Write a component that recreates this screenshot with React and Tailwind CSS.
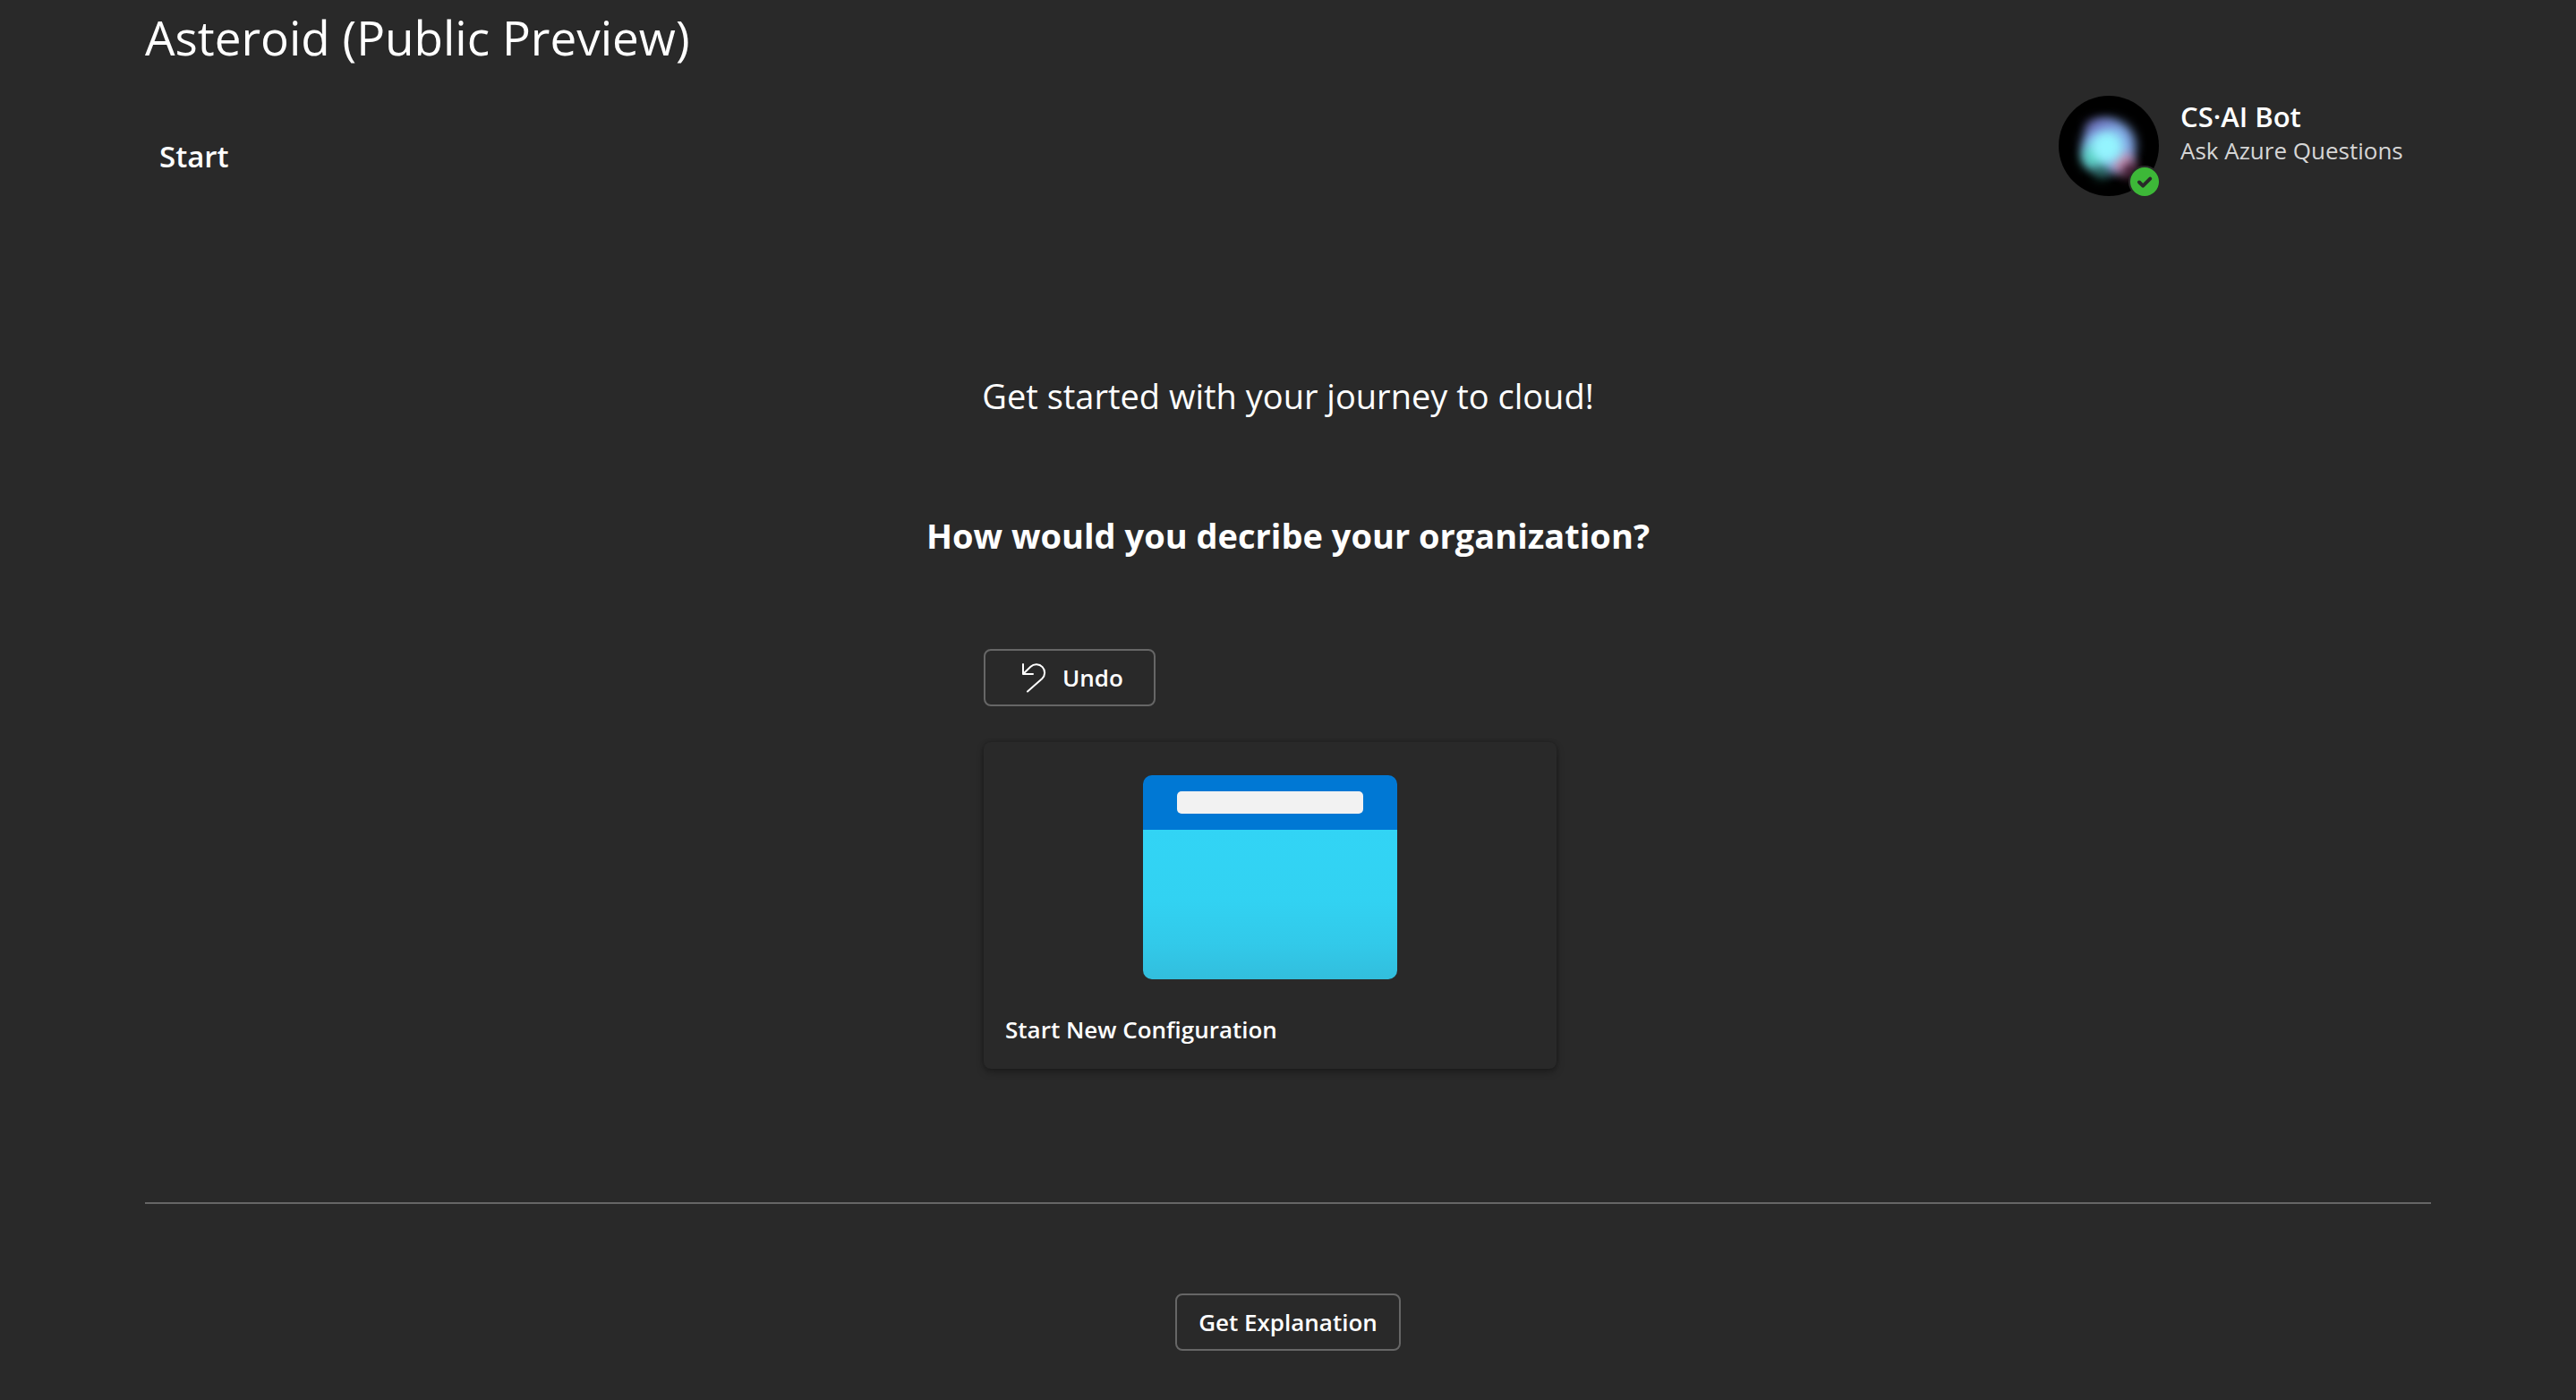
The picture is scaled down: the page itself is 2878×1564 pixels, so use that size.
function BotAvatar() {
  return (
    <svg viewBox="0 0 112 112" className="size-28" role="img" aria-label="CS·AI Bot, available">
      <defs>
        <filter id="soft" x="-100%" y="-100%" width="300%" height="300%" colorInterpolationFilters="sRGB">
          <feGaussianBlur stdDeviation="6" />
        </filter>
      </defs>
      <circle cx="56" cy="56" r="56" fill="#000" />
      <circle cx="56" cy="56" r="30" fill="#80a4e4" filter="url(#soft)" />
      <ellipse cx="46" cy="35" rx="16" ry="9" fill="#7470c4" fillOpacity="0.7" filter="url(#soft)" />
      <ellipse cx="39" cy="68" rx="13" ry="14" fill="#54ccbc" filter="url(#soft)" />
      <circle cx="48" cy="84" r="9" fill="#206858" fillOpacity="0.8" filter="url(#soft)" />
      <circle cx="72" cy="75" r="12" fill="#c890b4" filter="url(#soft)" />
      <circle cx="80" cy="84" r="9" fill="#401830" filter="url(#soft)" />
      <circle cx="54" cy="57" r="18" fill="#94f4fe" filter="url(#soft)" />
      <circle cx="96" cy="96" r="18" fill="#292929" />
      <circle cx="96" cy="96" r="16" fill="#3db838" />
      <path d="M90 96.500l4.200 4.200 8-8" fill="none" stroke="#292929" strokeWidth="4" strokeLinecap="round" strokeLinejoin="round" />
    </svg>
  );
}

function UndoIcon() {
  return (
    <svg viewBox="0 0 40 40" className="size-10" fill="none" stroke="currentColor" strokeWidth="2" strokeLinecap="round" strokeLinejoin="round" aria-hidden="true">
      <path d="M8 5v11h11" />
      <path d="M8.500 15.500L16.500 7.700A9.200 9.200 0 0 1 29.200 21.200L13 35.500" />
    </svg>
  );
}

function WindowIcon() {
  return (
    <svg viewBox="0 0 284 228" className="mx-auto h-[228px] w-[284px]" aria-hidden="true">
      <defs>
        <linearGradient id="pane" x1="0" y1="0" x2="0" y2="1">
          <stop offset="0" stopColor="#32d4f5" />
          <stop offset="0.47" stopColor="#32d2f2" />
          <stop offset="0.77" stopColor="#32c9e9" />
          <stop offset="1" stopColor="#32bedd" />
        </linearGradient>
      </defs>
      <path d="M0 61h284v157a10 10 0 0 1-10 10H10a10 10 0 0 1-10-10z" fill="url(#pane)" />
      <path d="M10 0h264a10 10 0 0 1 10 10v51H0V10A10 10 0 0 1 10 0z" fill="#0078d4" />
      <rect x="38" y="18" width="208" height="25" rx="5" fill="#f2f2f2" />
    </svg>
  );
}

const buttonClass =
  "flex h-16 cursor-pointer items-center justify-center gap-3 rounded-lg border-2 border-[#666666] text-[26px] leading-10 font-semibold hover:bg-[#3d3d3d]";

export default function App() {
  return (
    <main className="min-h-screen bg-[#292929] px-6 pb-14 font-['Open_Sans','Noto_Sans',sans-serif] text-white lg:px-[162px]">
      <h1 className="pt-1.5 text-[53px] leading-[72px]">Asteroid (Public Preview)</h1>

      <header className="flex items-start justify-between px-4 pt-[29px]">
        <h2 className="mt-11 text-[33px] leading-[48px] font-semibold">Start</h2>
        <div className="flex w-[400px] gap-6">
          <BotAvatar />
          <div className="pt-[3px] whitespace-nowrap">
            <p className="text-[31px] leading-10 font-semibold">CS·AI Bot</p>
            <p className="text-[26px] leading-9 text-[#d6d6d6]">Ask Azure Questions</p>
          </div>
        </div>
      </header>

      <section className="flex flex-col items-center pt-[195px] text-center">
        <p className="text-[38px] leading-14">Get started with your journey to cloud!</p>
        <h2 className="mt-25 text-[38px] leading-14 font-bold">How would you decribe your organization?</h2>
        <div className="mt-[99px] flex w-full max-w-[680px] flex-col items-start gap-10">
          <button type="button" className={`${buttonClass} w-48`}>
            <UndoIcon />
            Undo
          </button>
          <button
            type="button"
            className="w-full max-w-[640px] cursor-pointer rounded-lg px-6 pt-[37px] pb-6 text-left shadow-[0_0_4px_rgba(0,0,0,0.24),0_4px_8px_rgba(0,0,0,0.28)]"
          >
            <WindowIcon />
            <span className="mt-9 block text-[26px] leading-10 font-semibold">Start New Configuration</span>
          </button>
        </div>
      </section>

      <hr className="mt-[149px] border-t-2 border-[#666666]" />

      <div className="mt-25 flex justify-center">
        <button type="button" className={`${buttonClass} px-6`}>
          Get Explanation
        </button>
      </div>
    </main>
  );
}
